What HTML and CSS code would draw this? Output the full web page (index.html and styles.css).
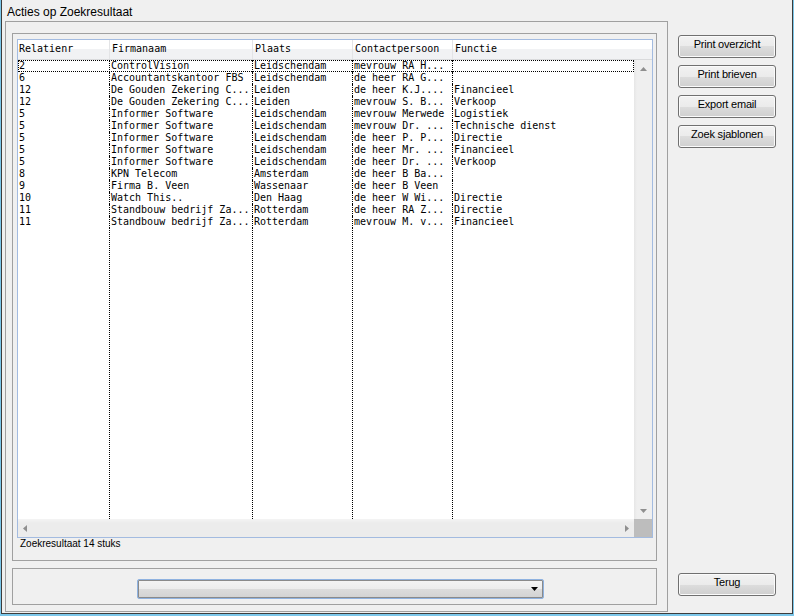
FILE: index.html
```html
<!DOCTYPE html>
<html>
<head>
<meta charset="utf-8">
<title>Acties op Zoekresultaat</title>
<link rel="stylesheet" href="styles.css">
</head>
<body>
<div class="frame">
  <div class="win">
    <div class="titlebar">Acties op Zoekresultaat</div>
    <div class="main">
      <div class="leftpanel">
        <div class="group results">
          <div class="list">
            <div class="hdr">
              <span>Relatienr</span><span>Firmanaam</span><span>Plaats</span><span>Contactpersoon</span><span>Functie</span>
            </div>
            <div class="mid">
              <div class="rows">
                <div class="row"><span>2</span><span>ControlVision</span><span>Leidschendam</span><span>mevrouw RA H...</span><span></span></div>
                <div class="row"><span>6</span><span>Accountantskantoor FBS</span><span>Leidschendam</span><span>de heer RA G...</span><span></span></div>
                <div class="row"><span>12</span><span>De Gouden Zekering C...</span><span>Leiden</span><span>de heer K.J....</span><span>Financieel</span></div>
                <div class="row"><span>12</span><span>De Gouden Zekering C...</span><span>Leiden</span><span>mevrouw S. B...</span><span>Verkoop</span></div>
                <div class="row"><span>5</span><span>Informer Software</span><span>Leidschendam</span><span>mevrouw Merwede</span><span>Logistiek</span></div>
                <div class="row"><span>5</span><span>Informer Software</span><span>Leidschendam</span><span>mevrouw Dr. ...</span><span>Technische dienst</span></div>
                <div class="row"><span>5</span><span>Informer Software</span><span>Leidschendam</span><span>de heer P. P...</span><span>Directie</span></div>
                <div class="row"><span>5</span><span>Informer Software</span><span>Leidschendam</span><span>de heer Mr. ...</span><span>Financieel</span></div>
                <div class="row"><span>5</span><span>Informer Software</span><span>Leidschendam</span><span>de heer Dr. ...</span><span>Verkoop</span></div>
                <div class="row"><span>8</span><span>KPN Telecom</span><span>Amsterdam</span><span>de heer B Ba...</span><span></span></div>
                <div class="row"><span>9</span><span>Firma B. Veen</span><span>Wassenaar</span><span>de heer B Veen</span><span></span></div>
                <div class="row"><span>10</span><span>Watch This..</span><span>Den Haag</span><span>de heer W Wi...</span><span>Directie</span></div>
                <div class="row"><span>11</span><span>Standbouw bedrijf Za...</span><span>Rotterdam</span><span>de heer RA Z...</span><span>Directie</span></div>
                <div class="row"><span>11</span><span>Standbouw bedrijf Za...</span><span>Rotterdam</span><span>mevrouw M. v...</span><span>Financieel</span></div>
                <div class="row fill"><span></span><span></span><span></span><span></span><span></span></div>
                <div class="focus"></div>
              </div>
              <div class="vscroll">
                <svg width="7" height="4" viewBox="0 0 7 4"><polygon points="0,4 3.5,0 7,4" fill="#8f8f8f"/></svg>
                <svg width="7" height="4" viewBox="0 0 7 4"><polygon points="0,0 7,0 3.5,4" fill="#8f8f8f"/></svg>
              </div>
            </div>
            <div class="listbottom">
              <div class="hscroll">
                <svg width="4" height="7" viewBox="0 0 4 7"><polygon points="4,0 0,3.5 4,7" fill="#8f8f8f"/></svg>
                <svg width="4" height="7" viewBox="0 0 4 7"><polygon points="0,0 4,3.5 0,7" fill="#8f8f8f"/></svg>
              </div>
              <div class="corner"></div>
            </div>
          </div>
          <div class="status">Zoekresultaat 14 stuks</div>
        </div>
        <div class="group combo-group">
          <div class="combo">
            <svg width="7" height="4" viewBox="0 0 7 4"><polygon points="0,0 7,0 3.5,4" fill="#000"/></svg>
          </div>
        </div>
      </div>
      <div class="rightpanel">
        <div class="btn">Print overzicht</div>
        <div class="btn">Print brieven</div>
        <div class="btn">Export email</div>
        <div class="btn">Zoek sjablonen</div>
        <div class="btn back">Terug</div>
      </div>
    </div>
  </div>
</div>
</body>
</html>
```

FILE: styles.css
```css
body {
  margin: 0;
  background: #f0f0f0;
  font-family: "Liberation Sans", Arial, sans-serif;
  color: #000;
}

.frame {
  width: 794px;
  height: 616px;
  box-sizing: border-box;
  border-left: 1px solid #7cc7ea;
  border-right: 1px solid #7cc7ea;
  border-bottom: 2px solid #7cc7ea;
}

.win {
  height: 100%;
  box-sizing: border-box;
  border-left: 1px solid #3c3c3c;
  border-right: 1px solid #3c3c3c;
  border-bottom: 1px solid #3c3c3c;
  display: flex;
  flex-direction: column;
}

.titlebar {
  height: 21px;
  box-sizing: border-box;
  padding: 4px 0 0 5px;
  font-size: 12px;
  line-height: 17px;
}

.main {
  flex: 1;
  display: flex;
  min-height: 0;
}

.leftpanel {
  margin-left: 3px;
  margin-bottom: 1px;
  width: 663px;
  box-sizing: border-box;
  border: 1px solid #a0a0a0;
  padding: 11px 0 6px 6px;
  display: flex;
  flex-direction: column;
}

.group {
  width: 645px;
  box-sizing: border-box;
  border: 1px solid #a0a0a0;
}

.results {
  height: 528px;
  padding: 5px 0 0 4px;
}

.list {
  width: 636px;
  height: 499px;
  box-sizing: border-box;
  border: 1px solid #a3bbe0;
  background: #fff;
  display: flex;
  flex-direction: column;
}

.hdr {
  height: 20px;
  box-sizing: border-box;
  border-bottom: 1px solid #d9dadc;
  background: linear-gradient(#ffffff 0, #ffffff 9px, #f1f2f4 9px, #f1f2f4 100%);
  display: grid;
  grid-template-columns: 91px 143px 100px 100px 1fr;
}

.hdr span {
  padding: 4px 0 0 2px;
  font: 10px/10px "DejaVu Sans Mono", monospace;
  white-space: pre;
}

.hdr span:first-child {
  padding-left: 1px;
}

.hdr span + span {
  border-left: 1px solid #e3e4e6;
}

.mid {
  flex: 1;
  display: flex;
  min-height: 0;
}

.rows {
  flex: 1;
  position: relative;
  display: flex;
  flex-direction: column;
}

.row {
  display: grid;
  grid-template-columns: 91px 143px 100px 100px 1fr;
  height: 12px;
}

.row span {
  font: 10px/11px "DejaVu Sans Mono", monospace;
  padding-left: 1px;
  white-space: pre;
  overflow: hidden;
}

.row span + span {
  border-left: 1px dotted #000;
}

.row.fill {
  flex: 1;
  height: auto;
}

.focus {
  position: absolute;
  top: 0;
  left: 0;
  right: 0;
  height: 12px;
  box-sizing: border-box;
  border: 1px dotted #000;
}

.vscroll {
  width: 18px;
  box-sizing: border-box;
  background: linear-gradient(90deg, #e6e6e6 0, #efefef 3px, #efefef 100%);
  display: flex;
  flex-direction: column;
  justify-content: space-between;
  align-items: center;
  padding: 7px 0 6px 1px;
}

.vscroll svg,
.hscroll svg {
  display: block;
}

.listbottom {
  height: 18px;
  display: flex;
}

.hscroll {
  flex: 1;
  background: linear-gradient(#f4f4f4 0, #ececec 4px, #ececec 100%);
  display: flex;
  justify-content: space-between;
  align-items: center;
  padding: 0 5px;
}

.corner {
  width: 18px;
  background: #bdbdbd;
}

.status {
  font-size: 10px;
  line-height: 12px;
  padding-left: 3px;
}

.combo-group {
  margin-top: 7px;
  height: 37px;
  padding: 10px 0 0 124px;
}

.combo {
  width: 407px;
  height: 20px;
  box-sizing: border-box;
  border: 1px solid #8fb2e0;
  border-radius: 2px;
  box-shadow: inset 0 0 0 1px #8a8a8a;
  background: linear-gradient(#f4f4f4 0, #ececec 50%, #dcdcdc 50%, #d2d2d2 100%);
  display: flex;
  justify-content: flex-end;
  align-items: center;
  padding-right: 5px;
}

.rightpanel {
  flex: 1;
  display: flex;
  flex-direction: column;
  padding: 14px 0 17px 10px;
  gap: 7px;
}

.btn {
  width: 98px;
  height: 23px;
  box-sizing: border-box;
  border: 1px solid #707070;
  border-radius: 3px;
  background: linear-gradient(#f2f2f2 0, #ebebeb 50%, #dddddd 50%, #cfcfcf 100%);
  box-shadow: inset 0 0 0 1px #fbfbfb;
  font-size: 11px;
  line-height: 16px;
  letter-spacing: -0.2px;
  text-align: center;
}

.btn.back {
  margin-top: auto;
}
```
